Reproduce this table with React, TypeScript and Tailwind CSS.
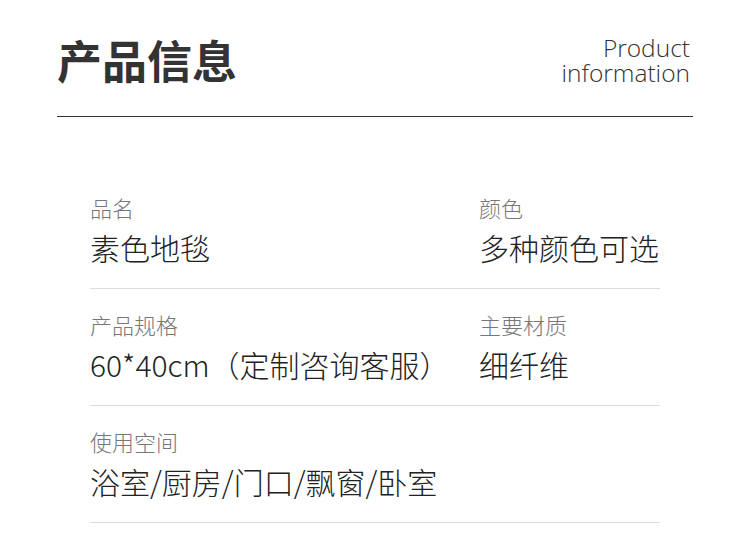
const rows = [
  [
    { label: '品名', value: '素色地毯' },
    { label: '颜色', value: '多种颜色可选' },
  ],
  [
    { label: '产品规格', value: '60*40cm（定制咨询客服）' },
    { label: '主要材质', value: '细纤维' },
  ],
  [{ label: '使用空间', value: '浴室/厨房/门口/飘窗/卧室' }],
];

export default function App() {
  return (
    <div className="h-[557px] w-[750px] bg-white font-['Noto_Sans_CJK_SC',sans-serif]">
      {/* Header */}
      <div className="mx-[57px] flex items-center justify-between border-b border-[#333] pt-[35px] pb-[31px]">
        <h1 className="text-[45px] font-bold leading-[50px] text-[#333]">产品信息</h1>
        <div className="mr-[3px] text-right font-['Open_Sans','Noto_Sans',sans-serif] text-[24.5px] font-light leading-[25px] text-[#333]">
          <div>Product</div>
          <div>information</div>
        </div>
      </div>

      {/* Spec rows */}
      <div className="mt-[55px] ml-[90px] w-[570px]">
        {rows.map((row, i) => (
          <div key={i} className="flex border-b border-[#ddd] pt-[20px] pb-[21px]">
            {row.map((cell) => (
              <div key={cell.label} className="w-[389px] last:w-auto">
                <div className="text-[22px] font-light leading-[30px] text-[#777]">{cell.label}</div>
                <div className="mt-[5px] whitespace-nowrap text-[30px] font-light leading-[40px] text-[#222]">
                  {cell.value}
                </div>
              </div>
            ))}
          </div>
        ))}
      </div>
    </div>
  );
}
